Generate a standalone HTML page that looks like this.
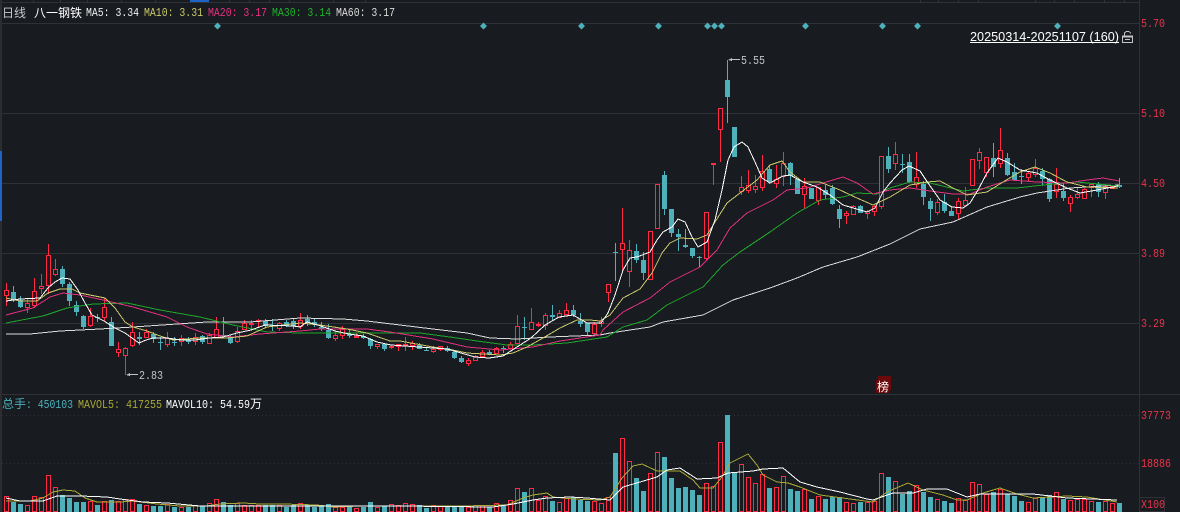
<!DOCTYPE html>
<html><head><meta charset="utf-8"><style>
html,body{margin:0;padding:0;background:#181b20}
svg{display:block}
text{font-family:"Liberation Mono","WenQuanYi Zen Hei",monospace;font-size:12px}
.cj{font-family:"Liberation Sans","WenQuanYi Zen Hei","Noto Sans CJK SC",sans-serif;font-size:12px}
.l{fill:none;stroke-width:1;shape-rendering:crispEdges}
.c{shape-rendering:crispEdges}
</style></head><body>
<svg width="1180" height="512" viewBox="0 0 1180 512" xmlns="http://www.w3.org/2000/svg">
<rect width="1180" height="512" fill="#181b20"/>
<g class="c" stroke="#2f3136" fill="none">
<path d="M0 2.5H1139M2 23.5H1139M2 113.5H1139M2 183.5H1139M2 253.5H1139M2 323.5H1139M0 394.5H1180M1139.5 0V512"/>
<path d="M33.5 0V2M60.5 0V2M87.5 0V2M121.5 0V2M155.5 0V2M229.5 0V2M249.5 0V2M269.5 0V2M289.5 0V2M333.5 0V2M365.5 0V2M920.5 0V2M938.5 0V2M958.5 0V2M978.5 0V2M1035.5 0V2M1054.5 0V2M1074.5 0V2M1104.5 0V2M1124.5 0V2"/>
<path d="M2 415.5H1139M2 463.5H1139" stroke-dasharray="1 3"/>
<rect x="1139.5" y="497.5" width="25" height="14"/>
</g>
<rect x="0" y="0" width="2" height="512" fill="#2b2d31" class="c"/>
<rect x="0" y="151" width="2" height="70" fill="#1f63c8" class="c"/>
<rect x="190" y="0" width="19" height="2" fill="#1f63c8" class="c"/>

<!-- header text -->
<text class="cj" x="2" y="17" fill="#c8c8c8">日线</text>
<text class="cj" x="34" y="17" fill="#ffffff">八一钢铁</text>
<text x="86" y="16" fill="#f0f0f0" textLength="53" lengthAdjust="spacingAndGlyphs">MA5: 3.34</text>
<text x="144" y="16" fill="#c9c96b" textLength="59" lengthAdjust="spacingAndGlyphs">MA10: 3.31</text>
<text x="208" y="16" fill="#e8307f" textLength="59" lengthAdjust="spacingAndGlyphs">MA20: 3.17</text>
<text x="272" y="16" fill="#1fb32c" textLength="59" lengthAdjust="spacingAndGlyphs">MA30: 3.14</text>
<text x="336" y="16" fill="#dcdcdc" textLength="59" lengthAdjust="spacingAndGlyphs">MA60: 3.17</text>

<!-- axis labels -->
<g fill="#e8344a">
<text x="1141" y="27" textLength="24" lengthAdjust="spacingAndGlyphs">5.70</text>
<text x="1141" y="117" textLength="24" lengthAdjust="spacingAndGlyphs">5.10</text>
<text x="1141" y="187" textLength="24" lengthAdjust="spacingAndGlyphs">4.50</text>
<text x="1141" y="257" textLength="24" lengthAdjust="spacingAndGlyphs">3.89</text>
<text x="1141" y="327" textLength="24" lengthAdjust="spacingAndGlyphs">3.29</text>
<text x="1141" y="419" textLength="30" lengthAdjust="spacingAndGlyphs">37773</text>
<text x="1141" y="467" textLength="30" lengthAdjust="spacingAndGlyphs">18886</text>
<text x="1141" y="508" textLength="24" lengthAdjust="spacingAndGlyphs">X100</text>
</g>

<!-- diamonds -->
<path fill="#4db0bb" d="M217.5 22.5l3.5 3.5-3.5 3.5-3.5-3.5zM483.5 22.5l3.5 3.5-3.5 3.5-3.5-3.5zM581.5 22.5l3.5 3.5-3.5 3.5-3.5-3.5zM658.5 22.5l3.5 3.5-3.5 3.5-3.5-3.5zM707.5 22.5l3.5 3.5-3.5 3.5-3.5-3.5zM714.5 22.5l3.5 3.5-3.5 3.5-3.5-3.5zM721.5 22.5l3.5 3.5-3.5 3.5-3.5-3.5zM805.5 22.5l3.5 3.5-3.5 3.5-3.5-3.5zM882.5 22.5l3.5 3.5-3.5 3.5-3.5-3.5zM917.5 22.5l3.5 3.5-3.5 3.5-3.5-3.5zM1057.5 22.5l3.5 3.5-3.5 3.5-3.5-3.5z"/>

<!-- date range -->
<text x="970" y="41" fill="#ffffff" textLength="149" lengthAdjust="spacingAndGlyphs" style="font-family:'Liberation Sans',sans-serif;font-size:13px">20250314-20251107 (160)</text>
<rect x="970" y="42" width="149" height="1" fill="#ffffff" class="c"/>
<g class="c" fill="none" stroke="#c4c4c4">
<path stroke-width="2" d="M1122 36.5h11"/>
<rect x="1122.5" y="36.5" width="10" height="6"/>
<path d="M1124.5 36V33.5Q1124.5 31.5 1127.5 31.5Q1130.5 31.5 1130.5 33.5"/>
<path d="M1125 39.5h5"/>
</g>

<!-- red wicks -->
<path class="c" stroke="#ff2b45" fill="none" d="M6.5 283V306M27.5 298V313M34.5 278V308M41.5 274V294M48.5 244V294M55.5 259V276M90.5 308V327M104.5 298V321M118.5 342V357M125.5 347V375M132.5 322V347M146.5 329V337M167.5 332V347M181.5 335V346M195.5 333V345M209.5 333V344M216.5 317V337M237.5 327V343M244.5 320V330M251.5 320V330M258.5 319V327M279.5 322V331M300.5 313V329M335.5 331V341M342.5 326V339M356.5 333V338M377.5 344V349M391.5 345V349M398.5 344V351M405.5 337V351M412.5 341V350M433.5 346V353M440.5 346V351M468.5 358V366M475.5 355V360M482.5 350V357M496.5 347V353M510.5 342V348M517.5 315V344M531.5 308V330M538.5 322V327M545.5 313V330M559.5 310V317M566.5 303V314M594.5 322V334M601.5 317V327M608.5 284V302M622.5 208V270M629.5 240V287M650.5 231V279M657.5 184V228M706.5 212V260M713.5 163V185M720.5 108V162M741.5 176V195M748.5 170V193M755.5 175V193M762.5 155V191M776.5 165V188M783.5 152V186M804.5 178V209M818.5 187V205M846.5 211V224M853.5 205V214M867.5 210V219M874.5 205V216M881.5 156V209M895.5 142V170M916.5 152V188M937.5 199V215M958.5 198V219M965.5 187V207M972.5 159V185M979.5 148V169M986.5 157V177M1000.5 128V168M1028.5 172V181M1035.5 159V177M1056.5 168V198M1070.5 195V212M1077.5 188V199M1084.5 188V198M1091.5 183V197M1105.5 185V199M1112.5 185V189"/>
<!-- red bodies -->
<path class="c" stroke="#ff2b45" fill="#181b20" d="M4.5 290.5h4v5h-4zM25.5 303.5h4v4h-4zM32.5 291.5h4v14h-4zM39.5 286.5h4v2h-4zM46.5 255.5h4v30h-4zM53.5 269.5h4v5h-4zM88.5 316.5h4v9h-4zM102.5 307.5h4v10h-4zM116.5 349.5h4v3h-4zM123.5 348.5h4v7h-4zM130.5 332.5h4v13h-4zM144.5 332.5h4v5h-4zM165.5 338.5h4v6h-4zM179.5 338.5h4v3h-4zM193.5 337.5h4v4h-4zM207.5 335.5h4v8h-4zM214.5 329.5h4v8h-4zM235.5 331.5h4v10h-4zM242.5 323.5h4v6h-4zM249.5 323.5h4v1h-4zM256.5 320.5h4v1h-4zM277.5 323.5h4v5h-4zM298.5 320.5h4v6h-4zM333.5 335.5h4v3h-4zM340.5 329.5h4v6h-4zM354.5 336.5h4v1h-4zM375.5 344.5h4v2h-4zM389.5 346.5h4v1h-4zM396.5 344.5h4v2h-4zM403.5 344.5h4v1h-4zM410.5 343.5h4v2h-4zM431.5 349.5h4v2h-4zM438.5 346.5h4v3h-4zM466.5 360.5h4v3h-4zM473.5 356.5h4v4h-4zM480.5 352.5h4v4h-4zM494.5 348.5h4v5h-4zM508.5 344.5h4v4h-4zM515.5 326.5h4v17h-4zM529.5 322.5h4v7h-4zM536.5 324.5h4v1h-4zM543.5 315.5h4v10h-4zM557.5 313.5h4v4h-4zM564.5 310.5h4v4h-4zM592.5 324.5h4v9h-4zM599.5 321.5h4v2h-4zM606.5 284.5h4v8h-4zM620.5 243.5h4v6h-4zM627.5 250.5h4v21h-4zM648.5 231.5h4v48h-4zM655.5 184.5h4v44h-4zM704.5 212.5h4v46h-4zM711.5 163.5h4v1h-4zM718.5 108.5h4v21h-4zM739.5 187.5h4v4h-4zM746.5 185.5h4v5h-4zM753.5 186.5h4v3h-4zM760.5 171.5h4v16h-4zM774.5 179.5h4v4h-4zM781.5 163.5h4v13h-4zM802.5 186.5h4v8h-4zM816.5 187.5h4v13h-4zM844.5 213.5h4v2h-4zM851.5 206.5h4v8h-4zM865.5 211.5h4v2h-4zM872.5 206.5h4v5h-4zM879.5 156.5h4v50h-4zM893.5 154.5h4v9h-4zM914.5 177.5h4v7h-4zM935.5 202.5h4v10h-4zM956.5 201.5h4v12h-4zM963.5 200.5h4v5h-4zM970.5 159.5h4v26h-4zM977.5 152.5h4v8h-4zM984.5 157.5h4v15h-4zM998.5 150.5h4v13h-4zM1026.5 173.5h4v4h-4zM1033.5 168.5h4v6h-4zM1054.5 184.5h4v7h-4zM1068.5 197.5h4v6h-4zM1075.5 194.5h4v3h-4zM1082.5 189.5h4v9h-4zM1089.5 184.5h4v3h-4zM1103.5 186.5h4v6h-4zM1110.5 186.5h4v2h-4z"/>
<!-- teal wicks -->
<path class="c" stroke="#4db0bb" fill="none" d="M13.5 286V302M20.5 296V308M62.5 266V287M69.5 282V306M76.5 301V316M83.5 315V329M97.5 314V322M111.5 317V346M139.5 332V345M153.5 332V343M160.5 337V350M174.5 337V346M188.5 337V344M202.5 335V344M223.5 317V337M230.5 335V344M265.5 319V328M272.5 319V331M286.5 320V327M293.5 319V329M307.5 315V326M314.5 319V327M321.5 322V331M328.5 324V339M349.5 329V338M363.5 334V339M370.5 338V349M384.5 343V351M419.5 343V349M426.5 348V351M447.5 346V352M454.5 350V359M461.5 356V363M489.5 350V354M503.5 346V353M524.5 317V340M552.5 305V321M573.5 305V317M580.5 313V327M587.5 323V335M615.5 243V281M636.5 244V263M643.5 252V280M664.5 171V215M671.5 209V237M678.5 229V251M685.5 229V248M692.5 248V258M699.5 256V267M727.5 60V123M734.5 127V157M769.5 165V184M790.5 162V185M797.5 179V194M811.5 188V199M825.5 185V199M832.5 185V205M839.5 205V228M860.5 205V213M888.5 147V173M902.5 154V173M909.5 154V183M923.5 181V205M930.5 198V221M944.5 194V213M951.5 206V216M993.5 143V177M1007.5 153V176M1014.5 163V181M1021.5 169V184M1042.5 168V186M1049.5 178V202M1063.5 183V201M1098.5 182V197M1119.5 178V188"/>
<!-- teal bodies -->
<path class="c" fill="#4db0bb" d="M11 292h5v7h-5zM18 300h5v7h-5zM60 269h5v15h-5zM67 284h5v17h-5zM74 305h5v7h-5zM81 316h5v11h-5zM95 317h5v1h-5zM109 322h5v24h-5zM137 337h5v2h-5zM151 334h5v5h-5zM158 342h5v1h-5zM172 342h5v1h-5zM186 340h5v2h-5zM200 336h5v6h-5zM221 335h5v1h-5zM228 337h5v6h-5zM263 321h5v5h-5zM270 325h5v1h-5zM284 322h5v4h-5zM291 321h5v5h-5zM305 319h5v4h-5zM312 322h5v2h-5zM319 327h5v2h-5zM326 330h5v8h-5zM347 334h5v2h-5zM361 336h5v2h-5zM368 339h5v7h-5zM382 344h5v5h-5zM417 345h5v4h-5zM424 350h5v1h-5zM445 348h5v3h-5zM452 352h5v6h-5zM459 358h5v4h-5zM487 352h5v2h-5zM501 348h5v1h-5zM522 327h5v1h-5zM550 315h5v2h-5zM571 310h5v5h-5zM578 321h5v3h-5zM585 323h5v9h-5zM613 252h5v1h-5zM634 251h5v9h-5zM641 260h5v13h-5zM662 175h5v34h-5zM669 209h5v24h-5zM676 234h5v3h-5zM683 245h5v2h-5zM690 248h5v8h-5zM697 257h5v1h-5zM725 80h5v17h-5zM732 127h5v30h-5zM767 169h5v13h-5zM788 163h5v13h-5zM795 179h5v15h-5zM809 188h5v11h-5zM823 190h5v5h-5zM830 188h5v16h-5zM837 209h5v10h-5zM858 206h5v7h-5zM886 156h5v13h-5zM900 164h5v1h-5zM907 162h5v20h-5zM921 184h5v13h-5zM928 201h5v8h-5zM942 202h5v9h-5zM949 211h5v5h-5zM991 158h5v9h-5zM1005 158h5v17h-5zM1012 172h5v8h-5zM1019 176h5v1h-5zM1040 171h5v8h-5zM1047 179h5v20h-5zM1061 191h5v7h-5zM1096 184h5v8h-5zM1117 185h5v2h-5z"/>

<!-- MA lines -->
<polyline class="l" stroke="#dcdcdc" points="6,334 30,334 60,331 100,329 133,327 177,324 207,322 250,322 300,318 343,319 367,321 400,325 433,329 467,333 490,338 517,339 550,337 600,335 610,333 650,327 663,322 703,315 733,300 770,288 797,278 823,267 857,257 890,244 920,229 953,222 987,207 1020,197 1037,193 1070,188 1119,185"/>
<polyline class="l" stroke="#1ea52a" points="6,323 43,316 67,308 93,304 127,303 160,310 200,317 233,325 267,332 300,333 420,333 450,337 477,341 507,345 533,345 567,343 600,338 607,337 623,327 647,320 667,305 703,287 723,265 740,252 770,232 797,213 820,200 843,197 857,193 877,194 890,188 910,182 930,183 963,191 987,188 1017,188 1043,185 1077,182 1119,186"/>
<polyline class="l" stroke="#e0307f" points="6,315 33,308 50,297 63,293 80,295 103,300 133,307 167,317 187,327 207,334 233,337 260,334 300,331 320,329 367,329 390,332 433,339 467,347 500,350 533,347 560,341 600,335 603,330 623,312 650,298 670,282 700,267 717,250 730,228 747,213 773,200 787,190 807,188 823,183 843,177 857,183 873,194 890,190 910,188 930,191 953,194 970,194 987,187 1010,180 1037,182 1067,183 1087,180 1103,178 1119,181"/>
<polyline class="l" stroke="#c9c96b" points="6,298 20,301 37,301 48,293 60,289 72,289 80,293 105,298 115,308 125,322 133,327 147,331 160,336 173,340 200,338 227,338 247,336 267,327 300,323 320,325 347,329 367,333 390,341 400,341 433,347 453,350 467,353 500,355 513,353 527,347 543,338 560,328 577,320 590,320 600,321 610,315 623,298 640,289 652,273 662,253 670,243 680,238 697,239 707,235 715,222 727,203 740,193 757,180 770,165 782,161 790,172 803,182 820,182 840,190 857,198 873,205 890,197 910,185 927,182 940,181 953,188 967,195 987,192 1003,182 1020,172 1035,167 1050,173 1067,182 1087,187 1118,188"/>
<polyline class="l" stroke="#ffffff" points="6,301 20,299 40,298 48,288 55,282 62,278 70,279 78,290 85,303 92,315 104,321 115,328 125,333 132,338 139,343 146,340 153,338 167,338 181,340 195,340 209,338 223,337 237,333 251,330 265,325 293,326 300,327 307,322 321,326 335,331 349,334 363,336 377,342 391,345 405,346 419,347 433,348 447,349 461,353 475,357 489,358 503,356 517,347 531,338 545,325 559,317 573,315 587,323 601,323 608,313 615,295 623,270 630,258 637,257 650,252 657,240 663,232 672,227 678,219 685,222 692,237 698,247 707,242 715,220 722,190 728,160 734,147 742,142 748,147 755,162 762,178 770,183 783,176 790,175 803,182 817,187 830,195 843,205 867,212 875,208 883,192 890,183 902,170 909,166 920,171 928,183 940,200 952,207 963,208 970,203 978,190 987,173 998,158 1007,162 1020,170 1037,173 1050,180 1067,188 1080,193 1097,190 1118,186"/>

<!-- annotations -->
<g fill="#c4c4c4" stroke="none">
<path class="c" d="M126 375l4-2v1h8v1h-8v1z"/>
<path class="c" d="M728 60l4-2v1h8v1h-8v1z"/>
<text x="139" y="379" textLength="24" lengthAdjust="spacingAndGlyphs">2.83</text>
<text x="741" y="64" textLength="24" lengthAdjust="spacingAndGlyphs">5.55</text>
</g>
<!-- badge -->
<rect x="878" y="376" width="13" height="14" fill="#6b0a0a" class="c"/>
<rect x="876" y="380" width="13" height="13" fill="#6b0a0a" class="c"/>
<text class="cj" x="877" y="391" fill="#ffffff">榜</text>

<!-- volume header -->
<text class="cj" x="2" y="408" fill="#4db0bb">总手</text>
<text x="26" y="408" fill="#4db0bb" textLength="47" lengthAdjust="spacingAndGlyphs">: 450103</text>
<text x="78" y="408" fill="#a9a935" textLength="84" lengthAdjust="spacingAndGlyphs">MAVOL5: 417255</text>
<text x="166" y="408" fill="#ffffff" textLength="84" lengthAdjust="spacingAndGlyphs">MAVOL10: 54.59</text>
<text class="cj" x="250" y="408" fill="#ffffff">万</text>

<!-- volume bars red -->
<path class="c" stroke="#ff2b45" fill="#181b20" d="M4.5 496.5h4V511.5h-4zM25.5 505.5h4V511.5h-4zM32.5 496.5h4V511.5h-4zM39.5 497.5h4V511.5h-4zM46.5 475.5h4V511.5h-4zM53.5 487.5h4V511.5h-4zM88.5 501.5h4V511.5h-4zM102.5 501.5h4V511.5h-4zM116.5 501.5h4V511.5h-4zM123.5 499.5h4V511.5h-4zM130.5 499.5h4V511.5h-4zM144.5 505.5h4V511.5h-4zM165.5 504.5h4V511.5h-4zM179.5 507.5h4V511.5h-4zM193.5 505.5h4V511.5h-4zM207.5 503.5h4V511.5h-4zM214.5 499.5h4V511.5h-4zM235.5 503.5h4V511.5h-4zM242.5 505.5h4V511.5h-4zM249.5 505.5h4V511.5h-4zM256.5 505.5h4V511.5h-4zM277.5 505.5h4V511.5h-4zM298.5 503.5h4V511.5h-4zM333.5 507.5h4V511.5h-4zM340.5 507.5h4V511.5h-4zM354.5 508.5h4V511.5h-4zM375.5 507.5h4V511.5h-4zM389.5 504.5h4V511.5h-4zM396.5 505.5h4V511.5h-4zM403.5 503.5h4V511.5h-4zM410.5 504.5h4V511.5h-4zM431.5 505.5h4V511.5h-4zM438.5 506.5h4V511.5h-4zM466.5 507.5h4V511.5h-4zM473.5 505.5h4V511.5h-4zM480.5 505.5h4V511.5h-4zM494.5 503.5h4V511.5h-4zM508.5 500.5h4V511.5h-4zM515.5 488.5h4V511.5h-4zM529.5 488.5h4V511.5h-4zM536.5 500.5h4V511.5h-4zM543.5 496.5h4V511.5h-4zM557.5 502.5h4V511.5h-4zM564.5 498.5h4V511.5h-4zM592.5 501.5h4V511.5h-4zM599.5 503.5h4V511.5h-4zM606.5 497.5h4V511.5h-4zM620.5 438.5h4V511.5h-4zM627.5 461.5h4V511.5h-4zM648.5 473.5h4V511.5h-4zM655.5 452.5h4V511.5h-4zM704.5 483.5h4V511.5h-4zM711.5 486.5h4V511.5h-4zM718.5 442.5h4V511.5h-4zM739.5 464.5h4V511.5h-4zM746.5 477.5h4V511.5h-4zM753.5 483.5h4V511.5h-4zM760.5 474.5h4V511.5h-4zM774.5 487.5h4V511.5h-4zM781.5 476.5h4V511.5h-4zM802.5 489.5h4V511.5h-4zM816.5 496.5h4V511.5h-4zM844.5 502.5h4V511.5h-4zM851.5 503.5h4V511.5h-4zM865.5 502.5h4V511.5h-4zM872.5 501.5h4V511.5h-4zM879.5 473.5h4V511.5h-4zM893.5 481.5h4V511.5h-4zM914.5 485.5h4V511.5h-4zM935.5 499.5h4V511.5h-4zM956.5 498.5h4V511.5h-4zM963.5 500.5h4V511.5h-4zM970.5 482.5h4V511.5h-4zM977.5 484.5h4V511.5h-4zM984.5 494.5h4V511.5h-4zM998.5 489.5h4V511.5h-4zM1026.5 502.5h4V511.5h-4zM1033.5 498.5h4V511.5h-4zM1054.5 492.5h4V511.5h-4zM1068.5 500.5h4V511.5h-4zM1075.5 499.5h4V511.5h-4zM1082.5 499.5h4V511.5h-4zM1089.5 501.5h4V511.5h-4zM1103.5 501.5h4V511.5h-4zM1110.5 503.5h4V511.5h-4z"/>
<!-- volume bars teal -->
<path class="c" fill="#4db0bb" d="M11 502h5V512h-5zM18 504h5V512h-5zM60 495h5V512h-5zM67 498h5V512h-5zM74 502h5V512h-5zM81 502h5V512h-5zM95 505h5V512h-5zM109 500h5V512h-5zM137 504h5V512h-5zM151 506h5V512h-5zM158 506h5V512h-5zM172 507h5V512h-5zM186 507h5V512h-5zM200 506h5V512h-5zM221 502h5V512h-5zM228 505h5V512h-5zM263 505h5V512h-5zM270 505h5V512h-5zM284 507h5V512h-5zM291 505h5V512h-5zM305 505h5V512h-5zM312 507h5V512h-5zM319 505h5V512h-5zM326 504h5V512h-5zM347 507h5V512h-5zM361 507h5V512h-5zM368 502h5V512h-5zM382 506h5V512h-5zM417 505h5V512h-5zM424 508h5V512h-5zM445 507h5V512h-5zM452 506h5V512h-5zM459 507h5V512h-5zM487 507h5V512h-5zM501 505h5V512h-5zM522 492h5V512h-5zM550 501h5V512h-5zM571 497h5V512h-5zM578 500h5V512h-5zM585 501h5V512h-5zM613 453h5V512h-5zM634 478h5V512h-5zM641 491h5V512h-5zM662 457h5V512h-5zM669 478h5V512h-5zM676 488h5V512h-5zM683 487h5V512h-5zM690 490h5V512h-5zM697 495h5V512h-5zM725 415h5V512h-5zM732 472h5V512h-5zM767 488h5V512h-5zM788 489h5V512h-5zM795 491h5V512h-5zM809 499h5V512h-5zM823 499h5V512h-5zM830 497h5V512h-5zM837 497h5V512h-5zM858 502h5V512h-5zM886 477h5V512h-5zM900 494h5V512h-5zM907 491h5V512h-5zM921 492h5V512h-5zM928 497h5V512h-5zM942 501h5V512h-5zM949 503h5V512h-5zM991 492h5V512h-5zM1005 494h5V512h-5zM1012 496h5V512h-5zM1019 501h5V512h-5zM1040 498h5V512h-5zM1047 495h5V512h-5zM1061 499h5V512h-5zM1096 502h5V512h-5zM1117 503h5V512h-5z"/>
<!-- volume MAs -->
<polyline class="l" stroke="#a9a935" points="6,501 30,501 43,498 53,492 63,490 75,491 85,498 97,502 120,502 133,501 157,504 180,506 207,506 220,504 243,503 260,504 283,504 317,505 333,507 360,506 400,506 463,506 507,505 523,498 533,495 547,493 553,497 573,499 600,500 610,497 622,478 633,466 642,464 657,471 680,471 693,480 700,488 713,488 722,477 730,463 748,454 757,465 763,475 777,482 788,483 800,487 820,495 850,499 873,502 887,492 908,483 923,490 943,495 957,500 967,500 983,493 1000,488 1017,494 1033,498 1067,496 1087,497 1117,502"/>
<polyline class="l" stroke="#ffffff" points="6,498 20,501 43,501 57,496 80,496 107,497 120,499 143,502 167,503 200,506 400,506 493,507 513,504 533,500 547,498 570,497 587,498 610,500 623,487 640,482 657,477 667,470 680,468 697,479 717,478 728,473 753,471 763,469 783,468 800,482 817,487 840,492 867,499 873,500 893,493 913,493 927,489 947,489 967,497 980,494 1033,494 1067,498 1117,500"/>
</svg>
</body></html>
